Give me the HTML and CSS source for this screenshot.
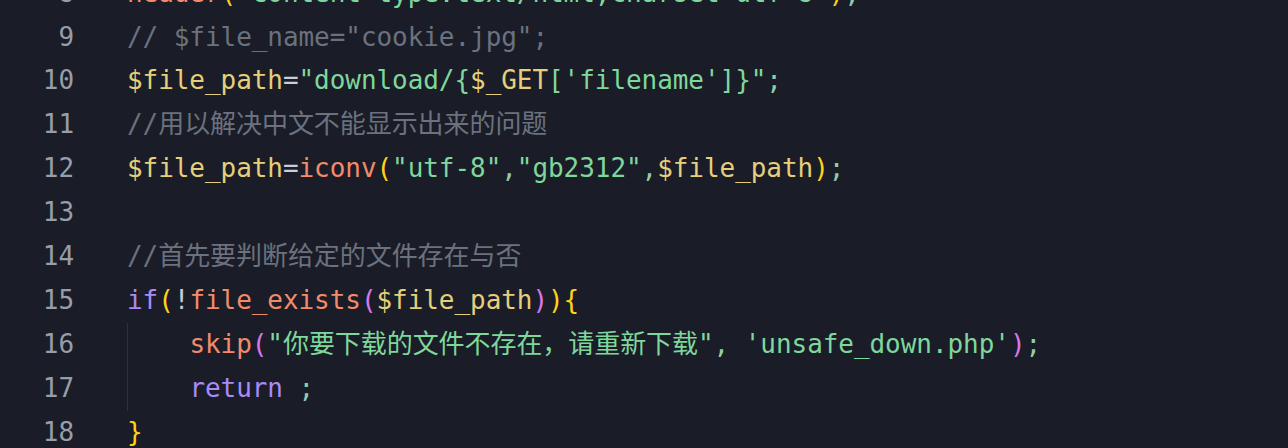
FILE: index.html
```html
<!DOCTYPE html>
<html lang="zh">
<head>
<meta charset="utf-8">
<title>unsafe download</title>
<link rel="stylesheet" href="styles.css">
</head>
<body>
<div class="editor">
  <div class="row"><span class="ln">8</span><span class="code"><span class="fn">header</span><span class="p1">(</span><span class="str">"Content-type:text/html;charset=utf-8"</span><span class="p1">)</span><span class="pun">;</span></span></div>
  <div class="row"><span class="ln">9</span><span class="code"><span class="cm">// $file_name="cookie.jpg";</span></span></div>
  <div class="row"><span class="ln">10</span><span class="code"><span class="var">$file_path</span><span class="op">=</span><span class="str">"download/{</span><span class="var">$_GET</span><span class="str">['filename']}"</span><span class="pun">;</span></span></div>
  <div class="row"><span class="ln">11</span><span class="code"><span class="cm">//用以解决中文不能显示出来的问题</span></span></div>
  <div class="row"><span class="ln">12</span><span class="code"><span class="var">$file_path</span><span class="op">=</span><span class="fn">iconv</span><span class="p1">(</span><span class="str">"utf-8"</span><span class="pun">,</span><span class="str">"gb2312"</span><span class="pun">,</span><span class="var">$file_path</span><span class="p1">)</span><span class="pun">;</span></span></div>
  <div class="row"><span class="ln">13</span><span class="code"></span></div>
  <div class="row"><span class="ln">14</span><span class="code"><span class="cm">//首先要判断给定的文件存在与否</span></span></div>
  <div class="row"><span class="ln">15</span><span class="code"><span class="kw">if</span><span class="p1">(</span><span class="op">!</span><span class="fn">file_exists</span><span class="p2">(</span><span class="var">$file_path</span><span class="p2">)</span><span class="p1">){</span></span></div>
  <div class="row"><span class="ln">16</span><span class="code"><span class="indent"></span><span class="fn">skip</span><span class="p2">(</span><span class="str">"你要下载的文件不存在，请重新下载"</span><span class="pun">, </span><span class="str">'unsafe_down.php'</span><span class="p2">)</span><span class="pun">;</span></span></div>
  <div class="row"><span class="ln">17</span><span class="code"><span class="indent"></span><span class="kw">return</span><span class="pun"> ;</span></span></div>
  <div class="row"><span class="ln">18</span><span class="code"><span class="p1">}</span></span></div>
</div>
</body>
</html>
```
FILE: styles.css
```css
html, body {
  margin: 0;
  padding: 0;
  background: #1a1d27;
  height: 100%;
  overflow: hidden;
}

.editor {
  margin-top: -28.4px;
  font-family: "DejaVu Sans Mono", "Noto Sans CJK SC", monospace;
  font-size: 26px;
  letter-spacing: -0.06px;
  color: #c9cdd8;
}

.row {
  display: flex;
  height: 43.9px;
  line-height: 43.9px;
  white-space: pre;
}

.ln {
  width: 74px;
  text-align: right;
  color: #979daa;
  flex: none;
}

.code {
  padding-left: 53px;
  display: flex;
  align-items: stretch;
}

.indent {
  display: inline-block;
  width: 61.4px;
  border-left: 1px solid #2d313c;
  flex: none;
}

.cm { color: #6b717e; }
.var { color: #e5cf7b; }
.str { color: #7ed79c; }
.fn { color: #f28a6c; }
.kw { color: #a98af7; }
.op { color: #c9cdd8; }
.pun { color: #8fcfa8; }
.p1 { color: #ffd21a; }
.p2 { color: #d777ea; }
```
